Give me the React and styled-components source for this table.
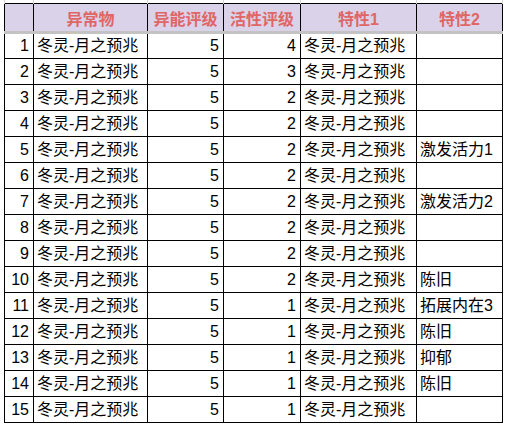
import React from "react";
import styled, { createGlobalStyle } from "styled-components";

const GlobalStyle = createGlobalStyle`
  html, body {
    margin: 0;
    padding: 0;
    background: #ffffff;
  }
`;

const rows = [
  [1, 5, 4, ""],
  [2, 5, 3, ""],
  [3, 5, 2, ""],
  [4, 5, 2, ""],
  [5, 5, 2, "激发活力1"],
  [6, 5, 2, ""],
  [7, 5, 2, "激发活力2"],
  [8, 5, 2, ""],
  [9, 5, 2, ""],
  [10, 5, 2, "陈旧"],
  [11, 5, 1, "拓展内在3"],
  [12, 5, 1, "陈旧"],
  [13, 5, 1, "抑郁"],
  [14, 5, 1, "陈旧"],
  [15, 5, 1, ""],
];

const widths = [29, 114, 76, 77, 116, 86];

const App = () => {
  return (
    <>
      <GlobalStyle />
      <Sheet>
        <Table>
          <colgroup>
            {widths.map((w, i) => (
              <col key={i} style={{ width: w }} />
            ))}
          </colgroup>
          <thead>
            <GridRow>
              {widths.map((w, i) => (
                <GridCell key={i} />
              ))}
            </GridRow>
            <HeadRow>
              <Head />
              <Head>异常物</Head>
              <Head>异能评级</Head>
              <Head>活性评级</Head>
              <Head>特性1</Head>
              <Head>特性2</Head>
            </HeadRow>
          </thead>
          <tbody>
            {rows.map(([n, a, b, t]) => (
              <Row key={n}>
                <Cell num>{n}</Cell>
                <Cell>冬灵-月之预兆</Cell>
                <Cell num>{a}</Cell>
                <Cell num>{b}</Cell>
                <Cell>冬灵-月之预兆</Cell>
                <Cell>{t}</Cell>
              </Row>
            ))}
          </tbody>
        </Table>
      </Sheet>
    </>
  );
};

export default App;

const Sheet = styled.div`
  padding-left: 4px;
  width: 505px;
  height: 427px;
  box-sizing: border-box;
  overflow: hidden;
`;

const Table = styled.table`
  border-collapse: collapse;
  table-layout: fixed;
  font-family: "Liberation Sans", "Noto Sans CJK SC", sans-serif;
  font-size: 16px;
  color: #000000;
`;

const GridRow = styled.tr`
  height: 3px;
`;

const GridCell = styled.td`
  padding: 0;
  height: 3px;
  border-right: 1px solid #d6d6d6;
  &:first-child {
    border-left: 1px solid #d6d6d6;
  }
`;

const HeadRow = styled.tr`
  height: 29px;
  background: #d9d2e9;
`;

const Head = styled.th`
  border: 1px solid #000000;
  border-bottom: 3px solid #c3c3c3;
  padding: 0 2px;
  color: #e06666;
  font-weight: bold;
  font-size: 16px;
  text-align: center;
  white-space: nowrap;
  overflow: hidden;
`;

const Row = styled.tr`
  height: 26px;
`;

const Cell = styled.td`
  border: 1px solid #000000;
  padding: 0 ${({ num }) => (num ? "4px" : "3px")};
  text-align: ${({ num }) => (num ? "right" : "left")};
  white-space: nowrap;
  overflow: hidden;
  line-height: 20px;
`;
